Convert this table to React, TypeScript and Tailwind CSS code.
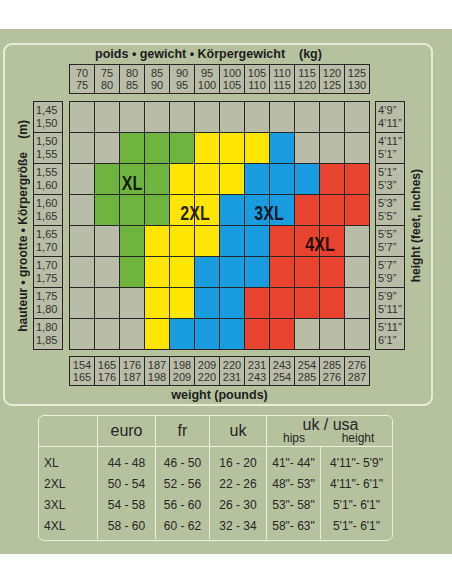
const kg = [
  ['70', '75'], ['75', '80'], ['80', '85'], ['85', '90'], ['90', '95'], ['95', '100'],
  ['100', '105'], ['105', '110'], ['110', '115'], ['115', '120'], ['120', '125'], ['125', '130'],
]

const lbs = [
  ['154', '165'], ['165', '176'], ['176', '187'], ['187', '198'], ['198', '209'], ['209', '220'],
  ['220', '231'], ['231', '243'], ['243', '254'], ['254', '285'], ['285', '276'], ['276', '287'],
]

const metres = [
  ['1,45', '1,50'], ['1,50', '1,55'], ['1,55', '1,60'], ['1,60', '1,65'],
  ['1,65', '1,70'], ['1,70', '1,75'], ['1,75', '1,80'], ['1,80', '1,85'],
]

const feet = [
  ['4’9”', '4’11”'], ['4’11”', '5’1”'], ['5’1”', '5’3”'], ['5’3”', '5’5”'],
  ['5’5”', '5’7”'], ['5’7”', '5’9”'], ['5’9”', '5’11”'], ['5’11”', '6’1”'],
]

// one string per height row, one letter per weight column
const chart = [
  '............',
  '..GGGYYYB...',
  '.GGGYYYBBBRR',
  '.GGGYYBBBRRR',
  '..GYYYBBRRR.',
  '..GYYBBBRRR.',
  '...YYBBRRRR.',
  '...YBBBRR...',
]

const fill: Record<string, string> = {
  '.': 'bg-[#b9bca6]',
  G: 'bg-[#6fb43f]',
  Y: 'bg-[#ffe600]',
  B: 'bg-[#1a9de0]',
  R: 'bg-[#e8432e]',
}

const sizes = [
  { label: 'XL', euro: '44 - 48', fr: '46 - 50', uk: '16 - 20', hips: '41"- 44"', height: '4\'11"- 5\'9"' },
  { label: '2XL', euro: '50 - 54', fr: '52 - 56', uk: '22 - 26', hips: '48"- 53"', height: '4\'11"- 6\'1"' },
  { label: '3XL', euro: '54 - 58', fr: '56 - 60', uk: '26 - 30', hips: '53"- 58"', height: '5\'1"- 6\'1"' },
  { label: '4XL', euro: '58 - 60', fr: '60 - 62', uk: '32 - 34', hips: '58"- 63"', height: '5\'1"- 6\'1"' },
]

const WeightRow = ({ values }: { values: string[][] }) => (
  <div className="grid grid-cols-[repeat(12,24px)] gap-px p-px bg-[#262626]">
    {values.map(([a, b]) => (
      <div key={a + b} className="h-[28px] bg-[#b9bca6] flex flex-col items-center justify-center text-[11px] leading-[12px] text-[#333]">
        <span>{a}</span>
        <span>{b}</span>
      </div>
    ))}
  </div>
)

const HeightCol = ({ values }: { values: string[][] }) => (
  <div className="mt-[37px] w-[30px] grid grid-rows-[repeat(8,30px)] gap-px p-px bg-[#262626]">
    {values.map(([a, b]) => (
      <div key={a + b} className="bg-[#b9bca6] flex flex-col justify-center pl-[2px] text-[11px] leading-[13px] text-[#333]">
        <span>{a}</span>
        <span>{b}</span>
      </div>
    ))}
  </div>
)

const SizeTag = ({ text, x, y }: { text: string; x: number; y: number }) => (
  <span
    className="absolute -translate-x-1/2 -translate-y-1/2 scale-x-[0.76] text-[21px] leading-none font-bold text-black/85"
    style={{ left: x, top: y }}
  >
    {text}
  </span>
)

export default function App() {
  return (
    <div className="w-[452px] h-[584px] bg-white font-['Liberation_Sans',Arial,sans-serif]">
      <div className="mt-[29px] h-[525px] bg-[#b6c19e] pt-[14px] px-[3px]">
        <div className="w-[430px] h-[363px] border-2 border-[#e9ecd9] rounded-[9px] flex flex-col">
          <div className="mt-[2px] pl-[64px]">
            <div className="w-[301px] pr-[22px] text-center text-[12.5px] leading-[14px] font-bold text-[#1e1e1e] whitespace-pre">
              poids • gewicht • Körpergewicht    (kg)
            </div>
          </div>

          <div className="mt-[3px] flex items-start">
            <div className="w-[28px] mt-[37px] h-[249px] flex items-center justify-center pl-[7px]">
              <span className="[writing-mode:vertical-rl] rotate-180 whitespace-pre text-[12px] font-bold text-[#1e1e1e]">
                hauteur • grootte • Körpergröße    (m)
              </span>
            </div>
            <HeightCol values={metres} />

            <div className="ml-[6px] w-[301px]">
              <WeightRow values={kg} />
              <div className="relative mt-[7px] grid grid-cols-[repeat(12,24px)] grid-rows-[repeat(8,30px)] gap-px p-px bg-[#262626]">
                {chart.flatMap((row, r) =>
                  row.split('').map((c, i) => <div key={r + '-' + i} className={fill[c]} />)
                )}
                <SizeTag text="XL" x={63} y={81} />
                <SizeTag text="2XL" x={126} y={111} />
                <SizeTag text="3XL" x={200} y={111} />
                <SizeTag text="4XL" x={251} y={142} />
              </div>
              <div className="mt-[6px]">
                <WeightRow values={lbs} />
              </div>
              <div className="mt-[2px] text-center text-[12.5px] leading-[14px] font-bold text-[#1e1e1e]">
                weight (pounds)
              </div>
            </div>

            <div className="ml-[5px]">
              <HeightCol values={feet} />
            </div>
            <div className="w-[26px] mt-[37px] h-[249px] flex items-center justify-center pr-[4px]">
              <span className="[writing-mode:vertical-rl] rotate-180 whitespace-nowrap text-[12px] font-bold text-[#1e1e1e]">
                height (feet, inches)
              </span>
            </div>
          </div>
        </div>

        <div className="mt-[9px] ml-[35px] w-[355px] h-[126px] border-[1.5px] border-[#eef0de] rounded-[6px] text-[#262626]">
          <div className="h-[31px] grid grid-cols-[58px_58px_54px_57px_128px] border-b-[1.5px] border-[#eef0de]">
            <div />
            <div className="border-l-[1.5px] border-[#eef0de] flex items-center justify-center text-[16px]">euro</div>
            <div className="border-l-[1.5px] border-[#eef0de] flex items-center justify-center text-[16px]">fr</div>
            <div className="border-l-[1.5px] border-[#eef0de] flex items-center justify-center text-[16px]">uk</div>
            <div className="border-l-[1.5px] border-[#eef0de] flex flex-col items-center justify-center">
              <span className="text-[16px] leading-[14px]">uk / usa</span>
              <div className="w-full grid grid-cols-[54px_74px] text-[12px] leading-[12px] text-center">
                <span>hips</span>
                <span>height</span>
              </div>
            </div>
          </div>
          <div className="h-[92px] grid grid-cols-[58px_58px_54px_57px_54px_72px] text-[12px]">
            <div className="pt-[6px] pl-[5px]">
              {sizes.map((s) => (
                <div key={s.label} className="h-[21px] leading-[21px]">{s.label}</div>
              ))}
            </div>
            {(['euro', 'fr', 'uk', 'hips', 'height'] as const).map((k) => (
              <div key={k} className="pt-[6px] border-l-[1.5px] border-[#eef0de] text-center">
                {sizes.map((s) => (
                  <div key={s.label} className="h-[21px] leading-[21px]">{s[k]}</div>
                ))}
              </div>
            ))}
          </div>
        </div>
      </div>
    </div>
  )
}
